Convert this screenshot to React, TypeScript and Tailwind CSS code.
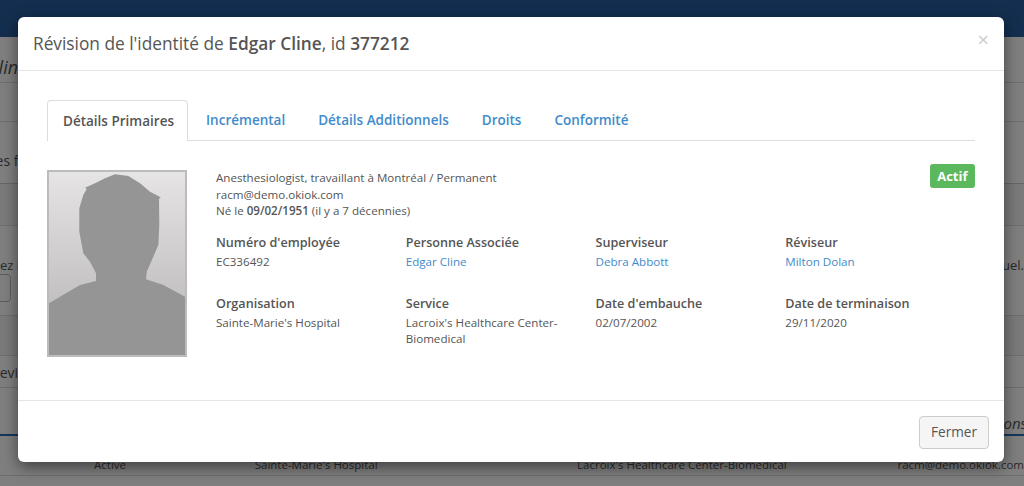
import React from 'react';

const tabs = ['Incrémental', 'Détails Additionnels', 'Droits', 'Conformité'];

const details: { label: string; value: string; link?: boolean }[] = [
  { label: "Numéro d'employée", value: 'EC336492' },
  { label: 'Personne Associée', value: 'Edgar Cline', link: true },
  { label: 'Superviseur', value: 'Debra Abbott', link: true },
  { label: 'Réviseur', value: 'Milton Dolan', link: true },
  { label: 'Organisation', value: "Sainte-Marie's Hospital" },
  { label: 'Service', value: "Lacroix's Healthcare Center-Biomedical" },
  { label: "Date d'embauche", value: '02/07/2002' },
  { label: 'Date de terminaison', value: '29/11/2020' },
];

// Page sitting behind the dialog, mostly hidden
const BackgroundPage = () => (
  <div className="h-[486px] overflow-hidden bg-white text-[#555]">
    <div className="h-[37px] bg-[#265c9f]"></div>
    <div className="h-[46px] border-b border-[#ddd] pt-[18px] text-[18px] italic leading-[24px] whitespace-nowrap">
      <span className="ml-[-12px]">Cline</span>
    </div>
    <div className="h-[39px] border-b border-[#ddd]"></div>
    <div className="h-[62px] border-b border-[#ccc] pt-[30px] text-[14px] leading-[18px] whitespace-nowrap">
      <span className="ml-[-8px]">les fo</span>
    </div>
    <div className="h-[42px] border-b border-[#ddd] bg-[#f5f5f5]"></div>
    <div className="flex h-[90px] justify-between border-b border-[#ddd] pt-[30px] text-[13px] leading-[18px] whitespace-nowrap">
      <div>
        <span className="ml-[-8px] block">nez l</span>
        <div className="ml-[-8px] h-[28px] w-[19px] rounded border border-[#bbb]"></div>
      </div>
      <span>tuel.</span>
    </div>
    <div className="h-[40px] border-b border-[#ddd] bg-[#f5f5f5]"></div>
    <div className="h-[32px] border-b border-[#ddd] pt-[7px] text-[14px] leading-[20px] whitespace-nowrap">
      <span className="ml-[-9px]">Revis</span>
    </div>
    <div className="flex h-[48px] items-end justify-end border-b-2 border-[#2a6fba] pb-[1px] text-[15px] italic leading-[20px]">
      <span className="mr-[-3px]">ions</span>
    </div>
    <div className="h-[40px] border-b border-[#ddd] text-[11.5px] leading-[16px] whitespace-nowrap">
      <div className="flex pt-[21px]">
        <span className="ml-[94px] w-[161px]">Active</span>
        <span className="w-[323px]">Sainte-Marie's Hospital</span>
        <span className="w-[321px]">Lacroix's Healthcare Center-Biomedical</span>
        <span>racm@demo.okiok.com</span>
      </div>
    </div>
  </div>
);

// Generic profile placeholder
const Avatar = () => (
  <div className="h-[187px] w-[140px] shrink-0 border-2 border-[#bdbcbc] bg-gradient-to-b from-[#e6e4e4] to-[#b4b2b2]">
    <svg viewBox="2 2 136 183" className="block h-full w-full">
      <path
        fill="#959595"
        d="M68 4.3 81.3 6 93 13.3 103 21.7 113.7 27.3 112 29 112.3 55 111.3 75 106.3 86.7 99.7 101.7 99 109.3 116.3 115 138 126.7V185H2V133.3L33 115 49 111V103.3L43 91.7 36.3 83.3 32.3 61.7V38.3L36.3 25 39.7 19 38 17.7 48 13.3 58 8.3Z"
      />
    </svg>
  </div>
);

const App = () => {
  return (
    <div className="relative h-[486px] w-[1024px] overflow-hidden font-['Open_Sans',sans-serif]">
      <BackgroundPage />
      <div className="absolute inset-0 bg-black/50"></div>

      <div className="absolute left-[18px] top-[17px] flex h-[445px] w-[986px] flex-col rounded-[6px] bg-white text-[#555] shadow-[0_5px_15px_rgba(0,0,0,0.5)]">
        {/* Header */}
        <div className="flex h-[54px] shrink-0 items-start justify-between border-b border-[#e5e5e5] px-[15px]">
          <h4 className="mt-[14px] text-[17.3px] leading-[26px]">
            Révision de l'identité de <span className="font-semibold">Edgar Cline</span>, id{' '}
            <span className="font-semibold">377212</span>
          </h4>
          <span className="mt-[12px] text-[20px] font-normal leading-[22px] text-[#ccc]">×</span>
        </div>

        {/* Body */}
        <div className="flex-1 px-[29px] pt-[29px]">
          <div className="flex h-[41px] border-b border-[#ddd] text-[13.5px] font-semibold leading-[20px]">
            <div className="h-[41px] w-[141px] shrink-0 whitespace-nowrap rounded-t border border-b-0 border-[#ddd] bg-white pl-[15px] pt-[10px] text-[#555]">
              Détails Primaires
            </div>
            {tabs.map((tab) => (
              <div key={tab} className="ml-[3px] px-[15px] pt-[10px] text-[#428bca]">
                {tab}
              </div>
            ))}
          </div>

          <div className="flex pt-[29px]">
            <Avatar />
            <div className="ml-[29px] flex-1">
              <div className="flex justify-between">
                <div className="text-[11.6px] leading-[16.5px]">
                  <div>Anesthesiologist, travaillant à Montréal / Permanent</div>
                  <div>racm@demo.okiok.com</div>
                  <div>
                    Né le <span className="font-semibold">09/02/1951</span> (il y a 7 décennies)
                  </div>
                </div>
                <span className="mt-[-6px] h-[24px] rounded-[3px] bg-[#5cb85c] px-[7.5px] text-[13px] font-bold leading-[24px] text-white">
                  Actif
                </span>
              </div>

              <div className="mt-[14px] grid grid-cols-4">
                {details.map((item) => (
                  <div key={item.label} className="h-[61px] pr-[16px] text-[11.6px] leading-[16.5px]">
                    <div className="mb-[2px] text-[12.6px] font-semibold leading-[18px]">{item.label}</div>
                    <div className={item.link ? 'text-[#428bca]' : ''}>{item.value}</div>
                  </div>
                ))}
              </div>
            </div>
          </div>
        </div>

        {/* Footer */}
        <div className="flex h-[62px] shrink-0 items-start justify-end border-t border-[#e5e5e5] pr-[15px] pt-[15px]">
          <button className="h-[33px] w-[70px] rounded border border-[#ccc] bg-[#f5f5f5] text-[13.6px] text-[#555]">
            Fermer
          </button>
        </div>
      </div>
    </div>
  );
};

export default App;
